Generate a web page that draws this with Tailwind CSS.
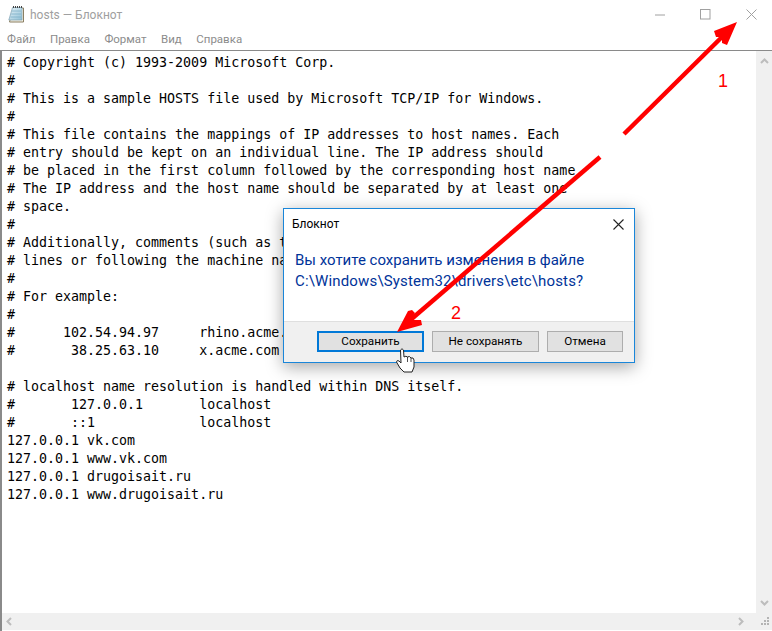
<!DOCTYPE html>
<html lang="ru">
<head>
<meta charset="utf-8">
<title>hosts — Блокнот</title>
<script src="https://cdn.jsdelivr.net/npm/@tailwindcss/browser@4"></script>
</head>
<body class="relative w-[772px] h-[631px] overflow-hidden bg-white font-['Roboto','Noto_Sans',sans-serif]">

<!-- title bar -->
<header class="flex items-center h-[29px] pl-2">
  <svg width="17" height="17" viewBox="0 0 17 17" class="mr-[5px]">
    <defs><linearGradient id="pad" x1="0" y1="0" x2="1" y2="1"><stop offset="0" stop-color="#e8f3f8"/><stop offset="1" stop-color="#8fc0d6"/></linearGradient></defs>
    <path d="M5 2H15.500V16H1.500Z" fill="#f4efe2" stroke="#8a7f63"/>
    <path d="M4.500 1.500H14L14 14H.8Z" fill="url(#pad)" stroke="#7fa3b6" stroke-width=".7"/>
    <path d="M4 5H13M3.200 8H13M2.400 11H13" stroke="#7fb0c8" stroke-width=".8"/>
    <path d="M5 1H14.500" stroke="#444" stroke-width="2" stroke-dasharray="1 1"/>
  </svg>
  <span class="text-[12px] text-[#a0a0a0]">hosts — Блокнот</span>
  <div class="ml-auto flex items-center gap-[35px] pr-[15px]">
    <svg width="10" height="10" viewBox="0 0 10 10"><path d="M0 5H10" stroke="#a0a0a0"/></svg>
    <svg width="11" height="11" viewBox="0 0 11 11"><rect x=".5" y=".5" width="9.500" height="9.500" fill="none" stroke="#a0a0a0"/></svg>
    <svg width="11" height="11" viewBox="0 0 11 11"><path d="M.5 .5L10.500 10.500M10.500 .5L.5 10.500" stroke="#a0a0a0"/></svg>
  </div>
</header>

<!-- menu -->
<nav class="flex h-[21px] items-center gap-[14.500px] pl-[7px] text-[11.500px] text-[#8c8c8c]">
  <span>Файл</span><span>Правка</span><span>Формат</span><span>Вид</span><span>Справка</span>
</nav>

<!-- editor -->
<main class="flex flex-col h-[581px] border-t border-l-2 border-[#8a8a8a]">
  <div class="flex flex-1 min-h-0">
    <pre class="flex-1 pt-[3px] pl-[5px] text-[13.3px] leading-[18px] text-black font-['DejaVu_Sans_Mono',monospace]"># Copyright (c) 1993-2009 Microsoft Corp.
#
# This is a sample HOSTS file used by Microsoft TCP/IP for Windows.
#
# This file contains the mappings of IP addresses to host names. Each
# entry should be kept on an individual line. The IP address should
# be placed in the first column followed by the corresponding host name.
# The IP address and the host name should be separated by at least one
# space.
#
# Additionally, comments (such as these) may be inserted on individual
# lines or following the machine name denoted by a '#' symbol.
#
# For example:
#
#      102.54.94.97     rhino.acme.com          # source server
#       38.25.63.10     x.acme.com              # x client host

# localhost name resolution is handled within DNS itself.
#       127.0.0.1       localhost
#       ::1             localhost
127.0.0.1 vk.com
127.0.0.1 www.vk.com
127.0.0.1 drugoisait.ru
127.0.0.1 www.drugoisait.ru</pre>
    <div class="flex w-4 flex-col items-center justify-between bg-[#f0f0f0] py-[7px]">
      <svg width="9" height="6" viewBox="0 0 9 6"><path d="M1 5L4.500 1.500L8 5" fill="none" stroke="#bdbdbd" stroke-width="2"/></svg>
      <svg width="9" height="6" viewBox="0 0 9 6"><path d="M1 1L4.500 4.500L8 1" fill="none" stroke="#bdbdbd" stroke-width="2"/></svg>
    </div>
  </div>
  <div class="flex h-[17px] items-center justify-between bg-[#f0f0f0] pl-1 pr-[2px] mb-px">
    <svg width="6" height="9" viewBox="0 0 6 9"><path d="M5 1L1.500 4.500L5 8" fill="none" stroke="#bdbdbd" stroke-width="2"/></svg>
    <div class="flex items-center gap-[17px]">
      <svg width="6" height="9" viewBox="0 0 6 9"><path d="M1 1L4.500 4.500L1 8" fill="none" stroke="#bdbdbd" stroke-width="2"/></svg>
      <svg width="9" height="9" viewBox="0 0 9 9" fill="#b4b4b4"><rect x="6" y="0" width="2" height="2"/><rect x="3" y="3" width="2" height="2"/><rect x="6" y="3" width="2" height="2"/><rect x="0" y="6" width="2" height="2"/><rect x="3" y="6" width="2" height="2"/><rect x="6" y="6" width="2" height="2"/></svg>
    </div>
  </div>
</main>

<!-- save dialog -->
<section class="absolute left-[283px] top-[208px] flex h-[155px] w-[352px] flex-col border border-[#1a86d9] bg-white shadow-[0_4px_16px_rgba(0,0,0,0.35)]">
  <div class="flex h-[30px] items-center justify-between pl-2 pr-[10px]">
    <span class="text-[12px] text-black">Блокнот</span>
    <svg width="11" height="11" viewBox="0 0 11 11"><path d="M.5 .5L10.500 10.500M10.500 .5L.5 10.500" stroke="#222" stroke-width="1.100"/></svg>
  </div>
  <p class="flex-1 pl-[11px] pt-[11px] text-[15px] leading-[21px] text-[#003399]">Вы хотите сохранить изменения в файле<br><span class="tracking-[0.16px]">C:\Windows\System32\drivers\etc\hosts?</span></p>
  <div class="flex h-[41px] items-center justify-end gap-2 border-t border-[#dfdfdf] bg-[#f0f0f0] pr-[11px] pb-[1px] text-[11.700px] text-black">
    <button class="h-[21px] w-[107px] border-2 border-[#0078d7] bg-[#e1e1e1]">Сохранить</button>
    <button class="h-[21px] w-[107px] border border-[#adadad] bg-[#e1e1e1]">Не сохранять</button>
    <button class="h-[21px] w-[76px] border border-[#adadad] bg-[#e1e1e1]">Отмена</button>
  </div>
</section>

<!-- red annotations -->
<svg class="absolute inset-0 pointer-events-none" width="772" height="631" viewBox="0 0 772 631" fill="none">
  <path d="M624 134L726 33" stroke="#ff0000" stroke-width="4.500"/>
  <path d="M737 22L714 31L716 37L722 37L722 43L727 45Z" fill="#ff0000"/>
  <path d="M600 157L408 322" stroke="#ff0000" stroke-width="4.500"/>
  <path d="M397 332L408 311L412 310L415 313L411 319L413 320L421 320L422 325Z" fill="#ff0000"/>
  <!-- hand cursor -->
  <path d="M400.500 350Q402 347.500 403.500 350L404 357Q406 355.500 407.500 357Q409.500 355.500 411 358Q413.500 357 414 360L414 367L412 372L404 372L400 368L396.500 362Q397 359.500 399 361L401 363Z" fill="#fff" stroke="#222" stroke-linejoin="round"/>
  <path d="M407.500 357V362M411 358V362" stroke="#222" stroke-width=".8"/>
</svg>
<span class="absolute left-[718px] top-[70px] text-[18px] leading-[22px] text-[#ff0000] font-['Liberation_Sans',sans-serif]">1</span>
<span class="absolute left-[451px] top-[302px] text-[18px] leading-[22px] text-[#ff0000] font-['Liberation_Sans',sans-serif]">2</span>

</body>
</html>
